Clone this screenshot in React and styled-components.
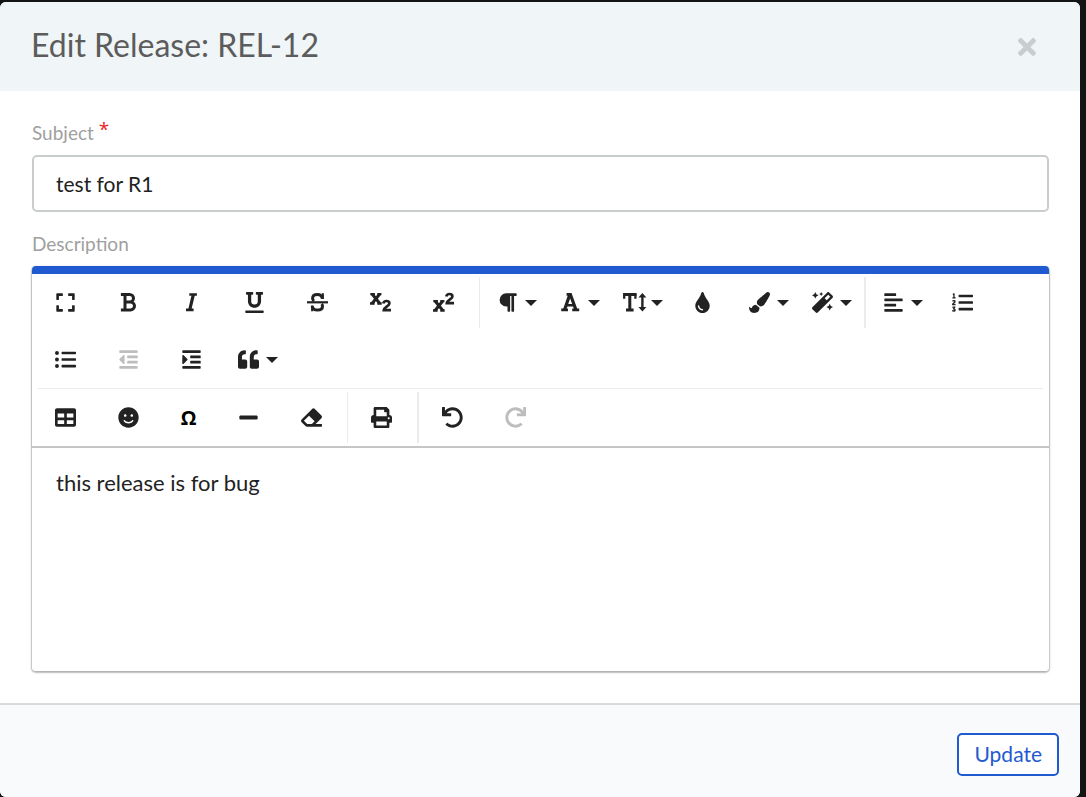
import React, { useState } from 'react';
import styled, { createGlobalStyle } from 'styled-components';
import {
  FaExpand, FaUnderline, FaParagraph, FaTint, FaPaintBrush, FaMagic, FaAlignLeft,
  FaListOl, FaListUl, FaOutdent, FaIndent, FaQuoteLeft, FaTable, FaSmile, FaMinus,
  FaEraser, FaPrint, FaUndo, FaRedo, FaTimes,
} from 'react-icons/fa';

const GlobalStyle = createGlobalStyle`
* { box-sizing: border-box; }
body {
  margin: 0;
  background: #131414;
  font-family: Lato, 'Liberation Sans', sans-serif;
}
`;

const Page = styled.div`
padding: 2px 6px 0 0;
`;

const Modal = styled.form`
display: flex;
flex-direction: column;
min-height: calc(100vh - 2px);
background: #fff;
border-radius: 6px;
overflow: hidden;
`;

const ModalHeader = styled.header`
display: flex;
align-items: center;
justify-content: space-between;
height: 89px;
padding: 0 40px 0 31px;
background: #f0f5f8;
`;

const Title = styled.h1`
margin: 0;
padding-bottom: 4px;
font-size: 32px;
font-weight: 400;
line-height: 40px;
color: #5c5c5c;
`;

const CloseButton = styled.button`
display: flex;
padding: 0;
border: none;
background: none;
color: #c9cdcd;
font-size: 26px;
cursor: pointer;
`;

const ModalBody = styled.div`
flex: 1;
display: flex;
flex-direction: column;
padding: 29px 31px 32px 32px;
`;

const Label = styled.label`
font-size: 19px;
line-height: 24px;
margin-bottom: 10px;
color: #a0a0a0;
`;

const Required = styled.span`
color: #ee2222;
font-family: 'Open Sans', sans-serif;
vertical-align: 4px;
line-height: 1;
`;

const SubjectInput = styled.input`
width: 100%;
height: 57px;
margin-bottom: 20px;
padding: 0 22px;
border: 2px solid #c9cdcd;
border-radius: 5px;
background: #fff;
color: #222;
font-family: inherit;
font-size: 21px;
outline: none;
`;

const Editor = styled.div`
flex: 1;
display: flex;
flex-direction: column;
border-top: 8px solid #1f5ad1;
border-radius: 4px;
box-shadow: 0 1px 3px rgba(0, 0, 0, 0.24), 0 1px 1px 1px rgba(0, 0, 0, 0.16);
`;

const Toolbar = styled.div`
border-bottom: 2px solid #c6c6c6;
box-shadow: 0 1px 1px rgba(0, 0, 0, 0.14);
`;

const ToolRow = styled.div`
display: flex;
flex-wrap: wrap;
padding-left: 2px;
`;

const RowLine = styled.hr`
height: 1px;
margin: 0 6px;
border: none;
background: #ebebeb;
`;

const Separator = styled.span`
width: ${props => (props.$thick ? 2 : 1)}px;
height: 51px;
margin: 3px 2px 3px 4px;
background: #ebebeb;
`;

const ToolButton = styled.button`
display: flex;
align-items: center;
justify-content: ${props => (props.$menu ? 'flex-start' : 'center')};
gap: 7px;
width: ${props => (props.$narrow ? 57 : 63)}px;
height: 57px;
padding: 0 0 0 ${props => (props.$menu ? 15 : 0)}px;
border: none;
background: none;
color: #222;
font-family: inherit;
font-size: 21px;
cursor: pointer;

svg {
  flex: none;
}

&:disabled {
  color: #bdbdbd;
  cursor: default;
}
`;

const Glyph = styled.svg.attrs({ viewBox: '0 0 21 21' })`
width: 21px;
height: 21px;
overflow: visible;
fill: none;
stroke: currentColor;
stroke-width: 3;
`;

const Caret = styled.span`
border: 6px solid transparent;
border-top-color: #222;
border-bottom: none;
`;

const Omega = styled.span`
color: #000;
font-weight: 700;
font-family: 'Open Sans', sans-serif;
font-size: 20px;
`;

const DescriptionInput = styled.textarea`
flex: 1;
width: 100%;
min-height: 222px;
padding: 20px 24px;
border: none;
border-radius: 0 0 4px 4px;
background: #fff;
color: #222;
font-family: inherit;
font-size: 22px;
line-height: 30px;
resize: none;
outline: none;
`;

const ModalFooter = styled.footer`
display: flex;
justify-content: flex-end;
padding: 28px 21px 21px;
border-top: 2px solid #d8dadc;
background: #f9fafc;
`;

const UpdateButton = styled.button`
height: 43px;
padding: 0 15px 2px;
border: 2px solid #1f5ad1;
border-radius: 5px;
background: #fff;
color: #1f5ad1;
font-family: inherit;
font-size: 21px;
cursor: pointer;
`;

// slab serif glyphs for the text formatting buttons
const BoldIcon = () => (
  <Glyph>
    <path d="M2.9 2.5H11.7a3.8 3.8 0 0 1 0 7.6H7M11.7 10.1h.8a4 3.9 0 0 1 0 7.8H2.9M7 2.5V18" />
  </Glyph>
);

const ItalicIcon = () => (
  <Glyph>
    <path d="M8.3 2.5h7.6M5 17.9h7.6" strokeWidth="2.6" />
    <path d="M12.4 2.4L8.7 18" strokeWidth="3.2" />
  </Glyph>
);

const StrikeIcon = () => (
  <Glyph>
    <path d="M0 10.3h21" strokeWidth="2.2" />
    <path d="M15.4 6.8C15 3.9 13 2.5 10.4 2.5c-3 0-4.8 1.5-4.8 3.8 0 1.3.5 2.1 1.3 2.8M14.6 12c.6.6.9 1.4.9 2.3 0 2.3-2 3.8-5 3.8s-5-1.5-5.3-4.2" />
    <path d="M15.8 1.3v5.8M5.2 13.5v5.8" strokeWidth="2.2" />
  </Glyph>
);

const ScriptIcon = ({ up }) => (
  <Glyph>
    <g transform={up ? 'translate(0 7)' : undefined}>
      <path d="M2.3 2.2l7.5 9.3M9.5 2.2L2.1 11.5" strokeWidth="3" />
      <path d="M.3 2.2h4.6M7.3 2.2h4.1M0 11.5h4.6M7.3 11.5h4.4" strokeWidth="2.3" />
    </g>
    <path
      transform={up ? 'translate(0 -7)' : undefined}
      d="M13.3 11.4c.3-1.6 1.5-2.4 3.2-2.4 1.8 0 2.9.9 2.9 2.4 0 2.5-5.3 3.4-5.6 6.8h7.2"
      strokeWidth="2.7"
    />
  </Glyph>
);
const SubscriptIcon = () => <ScriptIcon />;
const SuperscriptIcon = () => <ScriptIcon up />;

const FontIcon = () => (
  <Glyph>
    <path d="M9.9 2.2L4.5 18M10.3 2.2L16 18" strokeWidth="3.2" />
    <path d="M6.6 2.4h5.1M6.5 13.2h7.8M1.2 17.9h6.8M12.2 17.9h7" strokeWidth="2.6" />
  </Glyph>
);

const FontSizeIcon = () => (
  <Glyph>
    <path d="M.2 2.6h13.2M6.8 2.5V18M3 17.9h7.6" />
    <path d="M1.2 1.3v5.5M12.4 1.3v5.5" strokeWidth="2.3" />
    <path d="M19.4 4v13" strokeWidth="2.4" />
    <path d="M19.4 1l4 4.6h-8zM19.4 19.6l4-4.6h-8z" fill="currentColor" stroke="none" />
  </Glyph>
);

const textTools = [
  { name: 'Fullscreen', icon: FaExpand },
  { name: 'Bold', icon: BoldIcon },
  { name: 'Italic', icon: ItalicIcon },
  { name: 'Underline', icon: FaUnderline },
  { name: 'Strikethrough', icon: StrikeIcon },
  { name: 'Subscript', icon: SubscriptIcon },
  { name: 'Superscript', icon: SuperscriptIcon },
  { separator: true },
  { name: 'Paragraph Format', icon: FaParagraph, menu: true },
  { name: 'Font Family', icon: FontIcon, menu: true },
  { name: 'Font Size', icon: FontSizeIcon, menu: true },
  { name: 'Colors', icon: FaTint },
  { name: 'Inline Style', icon: FaPaintBrush, menu: true },
  { name: 'Paragraph Style', icon: FaMagic, menu: true },
  { separator: true, thick: true },
  { name: 'Align', icon: FaAlignLeft, menu: true },
  { name: 'Ordered List', icon: FaListOl },
  { name: 'Unordered List', icon: FaListUl },
  { name: 'Decrease Indent', icon: FaOutdent, disabled: true },
  { name: 'Increase Indent', icon: FaIndent },
  { name: 'Quote', icon: FaQuoteLeft, menu: true },
];

const insertTools = [
  { name: 'Insert Table', icon: FaTable },
  { name: 'Emoticons', icon: FaSmile },
  { name: 'Special Characters', text: 'Ω' },
  { name: 'Insert Horizontal Line', icon: FaMinus },
  { name: 'Clear Formatting', icon: FaEraser },
  { separator: true },
  { name: 'Print', icon: FaPrint },
  { separator: true, thick: true },
  { name: 'Undo', icon: FaUndo },
  { name: 'Redo', icon: FaRedo, disabled: true },
];

function Tools({ items }) {
  return (
    <ToolRow>
      {items.map((item, i) => {
        if (item.separator) {
          return <Separator key={i} $thick={item.thick} />;
        }
        const Icon = item.icon;
        return (
          <ToolButton
            key={i}
            type="button"
            aria-label={item.name}
            disabled={item.disabled}
            $menu={item.menu}
            $narrow={!!item.text}
          >
            {Icon ? <Icon /> : <Omega>{item.text}</Omega>}
            {item.menu && <Caret />}
          </ToolButton>
        );
      })}
    </ToolRow>
  );
}

export default function App() {
  const [subject, setSubject] = useState('test for R1');
  const [description, setDescription] = useState('this release is for bug');

  return (
    <Page>
      <GlobalStyle />
      <Modal onSubmit={e => e.preventDefault()}>
        <ModalHeader>
          <Title>Edit Release: REL-12</Title>
          <CloseButton type="button" aria-label="Close">
            <FaTimes />
          </CloseButton>
        </ModalHeader>
        <ModalBody>
          <Label htmlFor="subject">
            Subject <Required>*</Required>
          </Label>
          <SubjectInput
            id="subject"
            type="text"
            value={subject}
            onChange={e => setSubject(e.target.value)}
          />
          <Label htmlFor="description">Description</Label>
          <Editor>
            <Toolbar>
              <Tools items={textTools} />
              <RowLine />
              <Tools items={insertTools} />
            </Toolbar>
            <DescriptionInput
              id="description"
              value={description}
              onChange={e => setDescription(e.target.value)}
            />
          </Editor>
        </ModalBody>
        <ModalFooter>
          <UpdateButton type="submit">Update</UpdateButton>
        </ModalFooter>
      </Modal>
    </Page>
  );
}
